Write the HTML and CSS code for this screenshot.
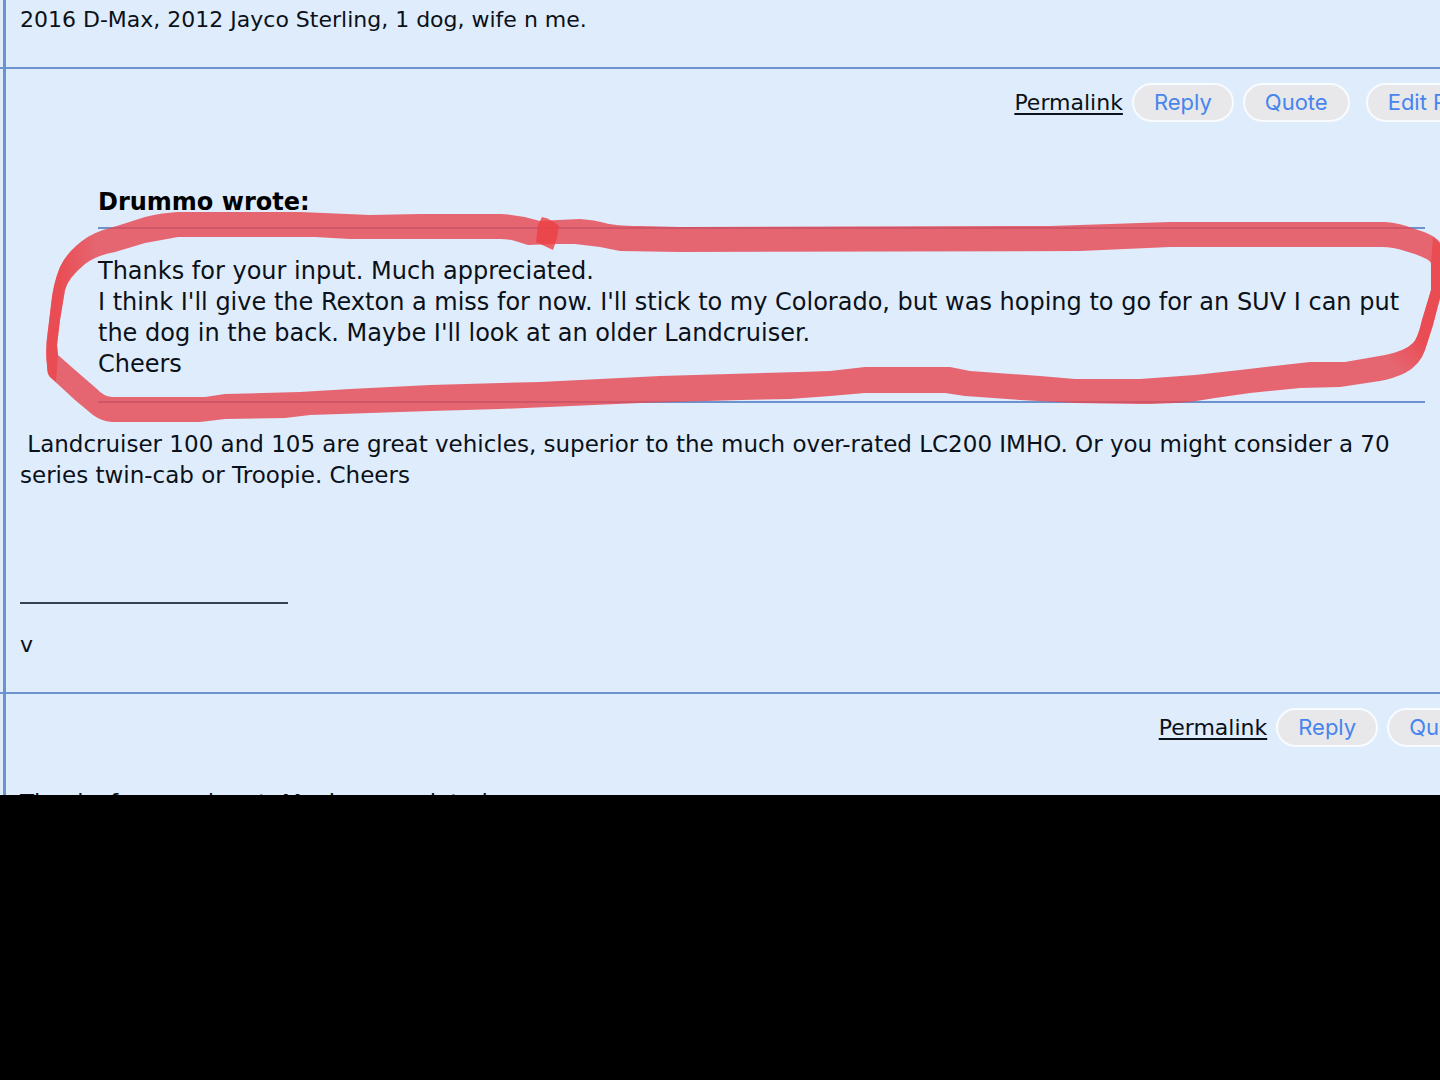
FILE: index.html
```html
<!DOCTYPE html>
<html lang="en">
<head>
    <meta charset="UTF-8">
    <meta name="viewport" content="width=device-width, initial-scale=1.0">
    <title>Forum thread</title>
    <link rel="stylesheet" href="styles.css">
</head>
<body>
    <main class="thread">
        <article class="post">
            <p class="signature">2016 D-Max, 2012 Jayco Sterling, 1 dog, wife n me.</p>
        </article>

        <article class="post" id="post-2">
            <div class="actions">
                <a class="permalink" href="#post-2">Permalink</a>
                <button type="button">Reply</button>
                <button type="button">Quote</button>
                <button type="button" class="edit">Edit Post</button>
            </div>
            <blockquote class="quote">
                <strong>Drummo wrote:</strong>
                <p class="quote-body">
                    Thanks for your input. Much appreciated.<br>
                    I think I'll give the Rexton a miss for now. I'll stick to my Colorado, but was hoping to go for an SUV I can put the dog in the back. Maybe I'll look at an older Landcruiser.<br>
                    Cheers
                </p>
            </blockquote>
            <p class="text">&nbsp;Landcruiser 100 and 105 are great vehicles, superior to the much over-rated LC200 IMHO. Or you might consider a 70 series twin-cab or Troopie. Cheers</p>
            <hr class="sig-line">
            <p class="signature">v</p>
        </article>

        <article class="post last" id="post-3">
            <div class="actions">
                <a class="permalink" href="#post-3">Permalink</a>
                <button type="button">Reply</button>
                <button type="button">Quote</button>
            </div>
            <p class="text">Thanks for your input. Much appreciated.</p>
        </article>

        <!-- red marker round the quoted text -->
        <svg class="marker" viewBox="0 0 1440 795" preserveAspectRatio="none" aria-hidden="true">
            <defs>
                <linearGradient id="fade-left" gradientUnits="userSpaceOnUse" x1="58" y1="0" x2="96" y2="0">
                    <stop offset="0" stop-color="#ec3e42" stop-opacity=".65"/>
                    <stop offset="1" stop-color="#ec3e42" stop-opacity="0"/>
                </linearGradient>
                <linearGradient id="fade-right" gradientUnits="userSpaceOnUse" x1="1424" y1="340" x2="1396" y2="368">
                    <stop offset="0" stop-color="#ec3e42" stop-opacity=".65"/>
                    <stop offset="1" stop-color="#ec3e42" stop-opacity="0"/>
                </linearGradient>
            </defs>
            <path class="ink" fill-rule="evenodd" d="M47 365Q45 350 48 330L51 305Q53 284 60 267Q65 256 76 246Q88 235 103 230L120 225L145 217Q160 213 178 212L300 212L370 215L420 214L500 214Q520 215 540 221L558 220L580 219Q595 220 605 223Q615 226 640 226L680 227L1050 226L1140 223L1170 222L1385 222Q1400 223 1415 229Q1432 234 1438 240L1446 250L1446 275L1440 298L1433 325L1425 350Q1420 365 1405 373Q1395 378 1380 381L1340 387L1300 388L1250 393L1215 398L1190 402Q1160 404 1140 404L1075 403L1020 400L965 396L945 393L865 393L830 396L790 399L740 400L640 403L500 409L430 411L310 415L285 418L225 419L200 422L112 422Q101 421 93 415L75 400L50 377Q47 374 47 365Z
                M58 355L75 370L97 389Q103 396 112 397L205 397L225 394L300 392L350 389L430 385L540 382L660 376L800 372L830 371L865 367L950 367L970 371L1040 376L1075 379L1140 379L1195 375L1240 370L1310 362L1345 362L1385 355Q1405 351 1413 343Q1418 338 1422 320L1431 290L1431 263Q1429 258 1405 251Q1393 247 1382 247L1170 247L1080 251L680 252L620 251L600 247L575 244L555 244L528 245L515 241Q508 239 500 239L350 239L315 237L178 237L145 243L115 252Q97 255 85 264Q68 278 65 290L60 320L57 345Z"/>
            <path class="ink-dark" d="M542 217Q551 219 559 226L557 238L553 250L536 242L538 225Z"/>
            <path fill="url(#fade-left)" d="M47 365Q45 350 48 330L51 305Q53 284 60 267Q65 256 76 246Q86 237 96 233L96 258Q90 260 85 264Q68 278 65 290L60 320L57 345L58 355L56 382L50 377Q47 374 47 365Z"/>
            <path fill="url(#fade-right)" d="M1433 237L1446 250L1446 275L1440 298L1433 325L1425 350Q1420 365 1405 373L1390 378L1390 354Q1405 351 1413 343Q1418 338 1422 320L1431 290L1431 263Z"/>
        </svg>
    </main>
</body>
</html>
```
FILE: styles.css
```css
* {
    box-sizing: border-box;
}
body {
    margin: 0;
    background: #000;
    color: #0b1118;
    font-family: Verdana, "DejaVu Sans", sans-serif;
    font-size: 22px;
    line-height: 31px;
}
p {
    margin: 0;
}
.thread {
    position: relative;
    overflow: hidden;
    padding-left: 3px;
    background: #dfecfc;
}
.post {
    position: relative;
    padding: 14px 0 32px 14px;
    border-left: 3px solid #6d93cf;
    border-bottom: 2px solid #6d93cf;
}
/* row line runs on past the column line */
.post::after {
    content: "";
    position: absolute;
    left: -6px;
    bottom: -2px;
    width: 6px;
    height: 2px;
    background: #6d93cf;
}
.post:first-child {
    padding-top: 4px;
}
.post.last {
    max-height: 101px;
    overflow: hidden;
    border-bottom: 0;
}
.post.last::after {
    content: none;
}
.actions {
    display: flex;
    justify-content: flex-end;
    align-items: center;
    gap: 9px;
    margin-right: -61px;
}
.last .actions {
    margin-right: -54px;
}
.permalink {
    color: #0b1118;
    text-decoration-thickness: 2px;
    text-underline-offset: 3px;
}
button {
    height: 39px;
    padding: 0 20px 2px;
    border: 2px solid #f8fbff;
    border-radius: 20px;
    background: #e8e8ea;
    color: #4785ee;
    font-family: Inter, sans-serif;
    font-size: 22px;
    white-space: nowrap;
    cursor: pointer;
}
.edit {
    margin-left: 7px;
}
.text {
    font-size: 23px;
}
.quote {
    margin: 65px 15px 26px 78px;
    font-size: 24px;
}
.quote strong {
    display: block;
    padding-bottom: 9px;
    color: #000;
}
.quote-body {
    padding: 27px 0 21px;
    border-top: 2px solid #6d93cf;
    border-bottom: 2px solid #6d93cf;
}
.sig-line {
    width: 268px;
    height: 2px;
    margin: 111px 0 25px;
    border: 0;
    background: #38424e;
}
.last .text {
    margin-top: 41px;
}
.marker {
    position: absolute;
    top: 0;
    left: 0;
    width: 100%;
    height: 100%;
    pointer-events: none;
}
.ink {
    fill: rgba(230, 70, 80, 0.81);
}
.ink-dark {
    fill: rgba(236, 62, 66, 0.8);
}
```
